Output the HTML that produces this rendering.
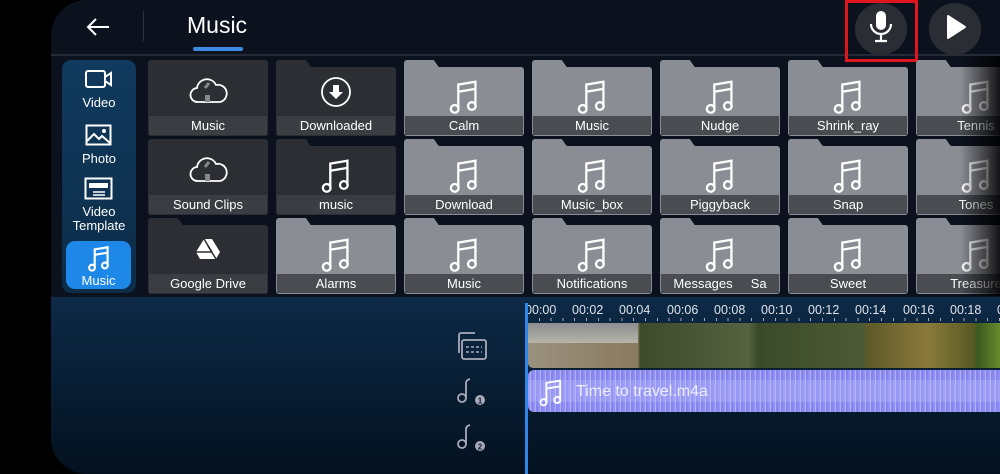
<!DOCTYPE html>
<html><head><meta charset="utf-8"><style>
*{margin:0;padding:0;box-sizing:border-box}
body{width:1000px;height:474px;background:#000;overflow:hidden;font-family:"Liberation Sans",sans-serif;position:relative}
.panel{position:absolute;left:51px;top:0;width:949px;height:474px;background:#0c121d;border-radius:36px 0 0 36px;overflow:hidden}
.abs{position:absolute}
.t{position:absolute;width:120px;height:76px}
.t .body{position:absolute;left:0;right:0;top:7px;bottom:0;border-radius:3px}
.t .tab{position:absolute;left:0;top:0;width:28px;height:12px;border-radius:3px 3px 0 0}
.t .tab:after{content:"";position:absolute;right:-6px;top:0;width:12px;height:12px;transform:skewX(35deg);background:inherit}
.t.full .body{top:0}
.t .lab{position:absolute;left:1px;right:1px;bottom:1px;height:19px;color:#fff;font-size:13px;text-align:center;line-height:19px;white-space:nowrap;overflow:hidden}
.g .body,.g .tab{background:#8b8d94}.g .lab{background:#4a4c52}
.d .body,.d .tab{background:#2c2e34}.d .lab{background:#3b3d43}
.t svg{position:absolute;left:42px;top:16px}
.side{color:#fff;font-size:13px;text-align:center;position:absolute;width:74px;left:62px}
.tick{position:absolute;top:303px;color:#dfe3ea;font-size:12.5px}
</style></head><body>
<div class="panel"></div>
<div class="abs" style="left:51px;top:54px;width:949px;height:2px;background:#252b36"></div>
<svg class="abs" style="left:85px;top:16px" width="26" height="22" viewBox="0 0 26 22"><path d="M24 11H3M11 3L3 11l8 8" stroke="#fff" stroke-width="2" fill="none"/></svg>
<div class="abs" style="left:143px;top:11px;width:1px;height:30px;background:#2c333e"></div>
<div class="abs" style="left:187px;top:12px;color:#fff;font-size:23px">Music</div>
<div class="abs" style="left:193px;top:47px;width:50px;height:4px;border-radius:2px;background:#3d8ae0"></div>
<div class="abs" style="left:855px;top:3px;width:52px;height:52px;border-radius:50%;background:#2a2d34"></div>
<div class="abs" style="left:845px;top:0;width:73px;height:62px;border:3px solid #e0161e"></div>
<svg class="abs" style="left:868px;top:10px" width="26" height="34" viewBox="0 0 26 34"><rect x="8" y="1" width="10" height="19" rx="5" fill="#fff"/><path d="M3 14a10 10 0 0 0 20 0M13 24v6M7 31h12" stroke="#fff" stroke-width="2.2" fill="none"/></svg>
<div class="abs" style="left:929px;top:3px;width:52px;height:52px;border-radius:50%;background:#2a2d34"></div>
<svg class="abs" style="left:945px;top:14px" width="22" height="26" viewBox="0 0 22 26"><path d="M3 2L20 13L3 24Z" fill="#fff" stroke="#fff" stroke-width="2" stroke-linejoin="round"/></svg>
<div class="abs" style="left:62px;top:60px;width:74px;height:233px;border-radius:9px;background:linear-gradient(#103a5e,#0c2c48)"></div>
<svg class="abs" style="left:84px;top:68px" width="30" height="22" viewBox="0 0 30 22"><rect x="2" y="3" width="19" height="16" rx="2" stroke="#fff" stroke-width="2" fill="none"/><path d="M21 9l6-4v12l-6-4" stroke="#fff" stroke-width="2" fill="none"/></svg>
<div class="side" style="top:95px">Video</div>
<svg class="abs" style="left:85px;top:124px" width="28" height="22" viewBox="0 0 28 22"><rect x="1.5" y="1.5" width="24" height="19" stroke="#fff" stroke-width="2" fill="none"/><path d="M2 17l7-7 5 5 3-3 8 7" stroke="#fff" stroke-width="2" fill="none"/><circle cx="19" cy="7" r="2" fill="#fff"/></svg>
<div class="side" style="top:151px">Photo</div>
<svg class="abs" style="left:84px;top:177px" width="30" height="24" viewBox="0 0 30 24"><rect x="1.5" y="1.5" width="26" height="20" stroke="#fff" stroke-width="2" fill="none"/><rect x="5" y="6" width="19" height="5" fill="#fff"/><path d="M9 15h12M9 18h12" stroke="#fff" stroke-width="1.5"/></svg>
<div class="side" style="top:205px;line-height:14px">Video<br>Template</div>
<div class="abs" style="left:66px;top:241px;width:65px;height:48px;border-radius:9px;background:#1e88e8"></div>
<svg class="abs" style="left:86px;top:243px" width="26" height="30" viewBox="0 0 24 28"><path d="M8 23V6l12-2v17M8 11l12-2" stroke="#fff" stroke-width="2" fill="none"/><circle cx="5.5" cy="23" r="2.7" stroke="#fff" stroke-width="2" fill="none"/><circle cx="17.5" cy="21" r="2.7" stroke="#fff" stroke-width="2" fill="none"/></svg>
<div class="side" style="top:273px;left:66px;width:65px">Music</div>

<svg width="0" height="0" style="position:absolute"><defs>
<symbol id="n" viewBox="0 0 24 28"><path d="M8 23V6l12-2v17M8 11l12-2" stroke="#fff" stroke-width="1.6" fill="none"/><circle cx="5.5" cy="23" r="2.7" stroke="#fff" stroke-width="1.6" fill="none"/><circle cx="17.5" cy="21" r="2.7" stroke="#fff" stroke-width="1.6" fill="none"/></symbol>
<symbol id="c" viewBox="0 0 40 30"><path d="M10 26a7 7 0 0 1-1-14 10 10 0 0 1 19-3 8 8 0 0 1 4 17z" stroke="#fff" stroke-width="1.8" fill="none"/><rect x="17" y="19" width="5" height="7" fill="#888"/><path d="M17 12l4-5" stroke="#888" stroke-width="3"/></symbol>
</defs></svg>

<div class="t d full" style="left:148px;top:60px"><div class="body"></div><svg style="left:40px;top:16px" width="40" height="30"><use href="#c"/></svg><div class="lab">Music</div></div>
<div class="t d" style="left:276px;top:60px"><div class="tab"></div><div class="body"></div><svg style="left:44px;top:16px" width="32" height="32" viewBox="0 0 32 32"><circle cx="16" cy="16" r="14" stroke="#fff" stroke-width="1.8" fill="none"/><path d="M13 9h6v7h4l-7 7-7-7h4z" fill="#fff"/></svg><div class="lab">Downloaded</div></div>
<div class="t g" style="left:404px;top:60px"><div class="tab"></div><div class="body"></div><svg width="36" height="40"><use href="#n"/></svg><div class="lab">Calm</div></div>
<div class="t g" style="left:532px;top:60px"><div class="tab"></div><div class="body"></div><svg width="36" height="40"><use href="#n"/></svg><div class="lab">Music</div></div>
<div class="t g" style="left:660px;top:60px"><div class="tab"></div><div class="body"></div><svg width="36" height="40"><use href="#n"/></svg><div class="lab">Nudge</div></div>
<div class="t g" style="left:788px;top:60px"><div class="tab"></div><div class="body"></div><svg width="36" height="40"><use href="#n"/></svg><div class="lab">Shrink_ray</div></div>
<div class="t g" style="left:916px;top:60px"><div class="tab"></div><div class="body"></div><svg width="36" height="40"><use href="#n"/></svg><div class="lab">Tennis</div></div>
<div class="t d full" style="left:148px;top:139px"><div class="body"></div><svg style="left:40px;top:16px" width="40" height="30"><use href="#c"/></svg><div class="lab">Sound Clips</div></div>
<div class="t d" style="left:276px;top:139px"><div class="tab"></div><div class="body"></div><svg width="36" height="40"><use href="#n"/></svg><div class="lab">music</div></div>
<div class="t g" style="left:404px;top:139px"><div class="tab"></div><div class="body"></div><svg width="36" height="40"><use href="#n"/></svg><div class="lab">Download</div></div>
<div class="t g" style="left:532px;top:139px"><div class="tab"></div><div class="body"></div><svg width="36" height="40"><use href="#n"/></svg><div class="lab">Music_box</div></div>
<div class="t g" style="left:660px;top:139px"><div class="tab"></div><div class="body"></div><svg width="36" height="40"><use href="#n"/></svg><div class="lab">Piggyback</div></div>
<div class="t g" style="left:788px;top:139px"><div class="tab"></div><div class="body"></div><svg width="36" height="40"><use href="#n"/></svg><div class="lab">Snap</div></div>
<div class="t g" style="left:916px;top:139px"><div class="tab"></div><div class="body"></div><svg width="36" height="40"><use href="#n"/></svg><div class="lab">Tones</div></div>
<div class="t d" style="left:148px;top:218px"><div class="tab"></div><div class="body"></div><svg style="left:48px;top:20px" width="24" height="22" viewBox="0 0 24 22"><path d="M8 1h8l8 13-4 7H4L0 14z" fill="#fff"/><path d="M8 1l8 13M16 14H0M20 21L12 8" stroke="#2c2e34" stroke-width="1.5"/></svg><div class="lab">Google Drive</div></div>
<div class="t g" style="left:276px;top:218px"><div class="tab"></div><div class="body"></div><svg width="36" height="40"><use href="#n"/></svg><div class="lab">Alarms</div></div>
<div class="t g" style="left:404px;top:218px"><div class="tab"></div><div class="body"></div><svg width="36" height="40"><use href="#n"/></svg><div class="lab">Music</div></div>
<div class="t g" style="left:532px;top:218px"><div class="tab"></div><div class="body"></div><svg width="36" height="40"><use href="#n"/></svg><div class="lab">Notifications</div></div>
<div class="t g" style="left:660px;top:218px"><div class="tab"></div><div class="body"></div><svg width="36" height="40"><use href="#n"/></svg><div class="lab">Messages &nbsp; &nbsp; Sa</div></div>
<div class="t g" style="left:788px;top:218px"><div class="tab"></div><div class="body"></div><svg width="36" height="40"><use href="#n"/></svg><div class="lab">Sweet</div></div>
<div class="t g" style="left:916px;top:218px"><div class="tab"></div><div class="body"></div><svg width="36" height="40"><use href="#n"/></svg><div class="lab">Treasure</div></div>
<div class="abs" style="left:960px;top:56px;width:40px;height:240px;background:linear-gradient(90deg,rgba(0,0,0,0),rgba(0,0,0,.85))"></div>

<div class="abs" style="left:51px;top:297px;width:949px;height:177px;background:linear-gradient(#0d2a47,#03111f);border-radius:0 0 0 36px"></div>
<div class="tick" style="left:525px">00:00</div><div class="tick" style="left:572px">00:02</div><div class="tick" style="left:619px">00:04</div><div class="tick" style="left:667px">00:06</div><div class="tick" style="left:714px">00:08</div><div class="tick" style="left:761px">00:10</div><div class="tick" style="left:808px">00:12</div><div class="tick" style="left:855px">00:14</div><div class="tick" style="left:903px">00:16</div><div class="tick" style="left:950px">00:18</div><div class="tick" style="left:997px">00:20</div>
<div class="abs" style="left:527px;top:318px;width:473px;height:3px;background:repeating-linear-gradient(90deg,#aab 0 1px,transparent 1px 11.8px)"></div>
<div class="abs" style="left:525px;top:303px;width:3px;height:171px;background:#2f86e8"></div>
<div class="abs" style="left:528px;top:323px;width:472px;height:45px;border-radius:5px 0 0 5px;background:linear-gradient(90deg,#9a917f 0,#8a7a5e 110px,#3d4a2c 112px,#556340 220px,#3a4a28 230px,#4d5a36 335px,#5f5a2a 340px,#8a7a3a 400px,#5a5a25 445px,#3b5a1e 450px,#6a8a2e 472px)"></div>
<div class="abs" style="left:528px;top:323px;width:110px;height:20px;background:linear-gradient(#8a8e90,#b7b4a8)"></div>
<div class="abs" style="left:528px;top:370px;width:472px;height:42px;border-radius:6px 0 0 6px;background:repeating-linear-gradient(90deg,#8f8ff5 0 2px,#b0b0ff 2px 3px,#8585ec 3px 5px)"></div>
<div class="abs" style="left:528px;top:380px;width:472px;height:22px;background:rgba(190,190,255,.35)"></div>
<svg class="abs" style="left:537px;top:376px" width="28" height="32"><use href="#n"/></svg>
<div class="abs" style="left:576px;top:383px;color:#eef;font-size:16px">Time to travel.m4a</div>
<svg class="abs" style="left:456px;top:331px" width="32" height="30" viewBox="0 0 32 30"><rect x="6" y="9" width="24" height="19" rx="2" stroke="#aab" stroke-width="1.8" fill="none"/><path d="M3 22V4a2 2 0 0 1 2-2h14" stroke="#aab" stroke-width="1.8" fill="none"/><path d="M10 16h16M10 21h16" stroke="#aab" stroke-width="1.5" stroke-dasharray="3 2"/></svg>
<svg class="abs" style="left:456px;top:377px" width="32" height="30" viewBox="0 0 32 30"><circle cx="6" cy="21" r="4" stroke="#aab" stroke-width="1.8" fill="none"/><path d="M10 21V6q0-3 4-4" stroke="#aab" stroke-width="1.8" fill="none"/><circle cx="24" cy="23" r="5" fill="#aab"/><text x="24" y="26.5" font-size="8" font-family="Liberation Sans" fill="#0c2036" text-anchor="middle" font-weight="bold">1</text></svg>
<svg class="abs" style="left:456px;top:423px" width="32" height="30" viewBox="0 0 32 30"><circle cx="6" cy="21" r="4" stroke="#aab" stroke-width="1.8" fill="none"/><path d="M10 21V6q0-3 4-4" stroke="#aab" stroke-width="1.8" fill="none"/><circle cx="24" cy="23" r="5" fill="#aab"/><text x="24" y="26.5" font-size="8" font-family="Liberation Sans" fill="#0c2036" text-anchor="middle" font-weight="bold">2</text></svg>
</body></html>
